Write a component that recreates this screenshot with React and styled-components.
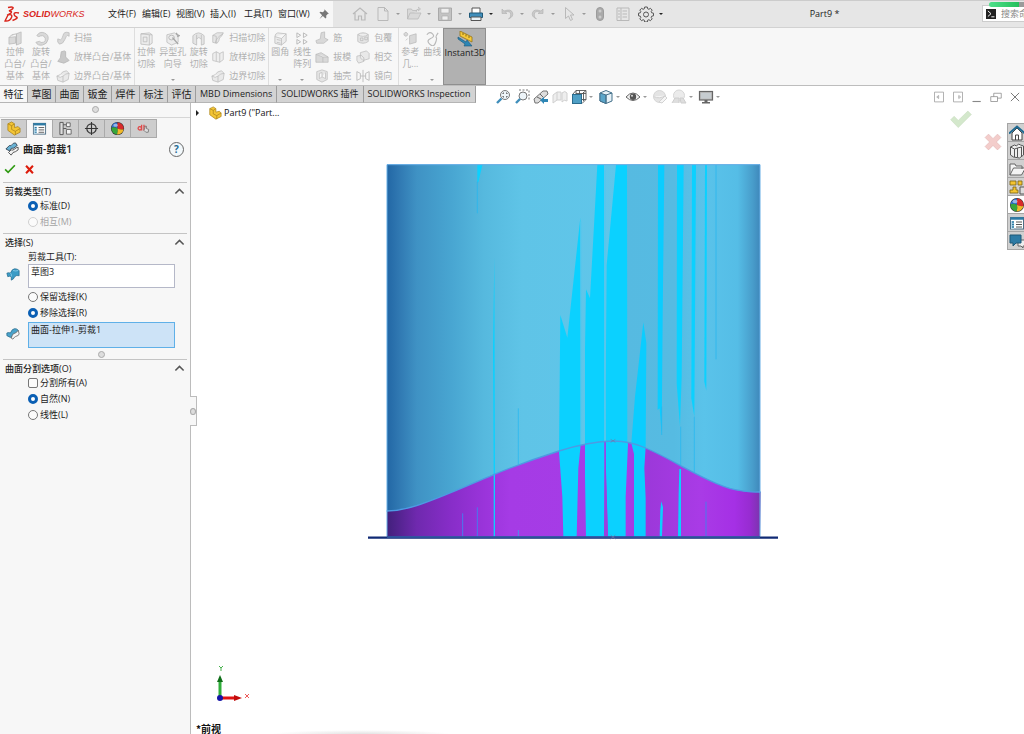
import React from 'react';
import styled, { createGlobalStyle, css } from 'styled-components';

const GlobalStyle = createGlobalStyle`
  * { box-sizing: border-box; }
  body {
    margin: 0;
    background: #fff;
    color: #222;
    font: 9px/12px "Open Sans", "Noto Sans CJK SC", sans-serif;
  }
  button {
    font: inherit;
    color: inherit;
    background: none;
    border: 0;
    padding: 0;
    margin: 0;
  }
`;

/* ---------- icons, all drawn on a 16 x 16 grid ---------- */

const g = '#b9b9b9';
const line = { fill: 'none', stroke: g, strokeWidth: 1 };
const solid = { fill: '#d9d9d9', stroke: g, strokeWidth: 0.8 };
const dark = { fill: 'none', stroke: '#555', strokeWidth: 1 };

const ball = (
  <>
    <circle cx="8" cy="8" r="7" fill="#333" />
    <path d="M8 8L8 1.500A6.500 6.500 0 0 0 1.600 7.200Q5 6 8 8z" fill="#2f6fd0" />
    <path d="M8 8L8 1.500A6.500 6.500 0 0 1 14.400 9Q11 9.500 8 8z" fill="#d92b2b" />
    <path d="M8 8Q5 6 1.600 7.200A6.500 6.500 0 0 0 7.500 14.500Q9 11 8 8z" fill="#37a63c" />
    <path d="M8 8Q9 11 7.500 14.500A6.500 6.500 0 0 0 14.400 9Q11 9.500 8 8z" fill="#f0b92a" />
    <ellipse cx="6" cy="4.500" rx="2.500" ry="1.700" fill="#fff" opacity=".5" />
  </>
);
const surface = (
  <>
    <path d="M1 7q2-1 4 0 2-5 5-5t5 2v6q-3-1-5 1-1 3-4 4V11q-2-1-4 0z" fill="#3b9cc6" stroke="#22688c" strokeWidth=".8" />
    <path d="M5 7q2 1 1 4M8 4q3 1 6 0" fill="none" stroke="#8fd0ea" strokeWidth=".9" />
  </>
);
const part = (
  <>
    <path d="M2 3l4-2 3 2v4l4-1 2 2v4l-6 3-7-5z" fill="#f3c536" stroke="#a9821a" strokeWidth=".8" />
    <path d="M2 3l4 2v4l4 2 5-3M10 11v4M6 5l3-2" fill="none" stroke="#a9821a" strokeWidth=".8" />
  </>
);
const propList = (
  <>
    <rect x="1.500" y="2.500" width="13" height="11.500" fill="#fff" stroke="#4f6f85" />
    <path d="M1.500 3.500h13" stroke="#2d7ba5" strokeWidth="2.500" />
    <path d="M2 6h3v8H2z" fill="#b9d8e8" />
    <path d="M3 7h2M3 9.500h2M3 12h2" stroke="#2d7ba5" strokeWidth="1.300" />
    <path d="M7 7h6M7 9.500h6M7 12h6" stroke="#555" />
  </>
);

const icons = {
  pin: <path d="M8.500 1.500l6 6-1.500.5-2 2 0 3-1 1L6.500 10.500 2 14.500 5.500 9.500 2 6l1-1 3.500.5 2-2z" fill="#777" />,
  home: <path d="M1 8l7-6 7 6M3 7v7h3.500v-4h3v4H13V7" {...line} strokeWidth="1.200" />,
  doc: <path d="M3 1.500h6.500l3.500 3.500v9.500H3zM9.500 1.500v3.500H13" {...line} />,
  open: <path d="M1.500 13V3h4l1 1.500h4M1.500 13L4 7h11l-3 6zM10 6q0-3 3-3M12 1l2.500 2L12 5" {...solid} />,
  save: (
    <>
      <path d="M1.500 2h13v12.500h-13z" fill="#c3c3c3" stroke="#aaa" />
      <path d="M4 2.500h8v4.500H4zM5 10h6v4H5z" fill="#eee" stroke="#aaa" strokeWidth=".6" />
    </>
  ),
  print: (
    <>
      <path d="M4 7V2h8v5" fill="#fff" stroke="#555" />
      <path d="M1.500 7h13v4.500h-13z" fill="#3f8ebb" stroke="#1f5878" />
      <path d="M3 11h10v3.500H3z" fill="#e9f2f7" stroke="#555" />
    </>
  ),
  undo: <path d="M3 3v4.500h5L6.200 6q5-1.500 5.500 2t-2.200 5q5.500-2.500 4-6.500T5 5z" fill="#c9c9c9" stroke="#b0b0b0" strokeWidth=".6" />,
  redo: <path d="M13 3v4.500H8L9.800 6Q4.800 4.500 4.300 8t2.200 5Q1 10.500 2.500 6.500T11 5z" fill="#c9c9c9" stroke="#b0b0b0" strokeWidth=".6" />,
  cursor: <path d="M4.500 1.500v11l3-2.500 2 4.500 2-1L9.500 9h3.500z" {...line} />,
  light: (
    <>
      <rect x="4.500" y="1.500" width="7" height="13" rx="3.500" fill="#aaa" stroke="#9c9c9c" />
      <circle cx="8" cy="5" r="1.500" fill="#ccc" />
      <circle cx="8" cy="11" r="1.500" fill="#ccc" />
    </>
  ),
  options: <path d="M2 2h12v12.500H2zM6 2v12.500M3 5h2M3 8h2M3 11h2M7.500 5H12M7.500 8H12M7.500 11H12" {...line} />,
  gear: (
    <path
      d="M6.700 1h2.600l.4 1.800 1.200.5 1.500-1 1.800 1.800-1 1.500.5 1.200 1.800.4v2.600l-1.800.4-.5 1.200 1 1.500-1.800 1.800-1.500-1-1.200.5-.4 1.800H6.700l-.4-1.800-1.200-.5-1.500 1-1.800-1.800 1-1.500-.5-1.200-1.800-.4V7.200l1.800-.4.5-1.200-1-1.500 1.800-1.800 1.500 1 1.200-.5zM8 6a2.500 2.500 0 1 0 0 5 2.500 2.500 0 0 0 0-5z"
      {...dark}
    />
  ),

  extrude: <path d="M1 7l7-1v7l-7 1zM9 3l5-2v12l-5 2zM9 3v12M1 7l3-3 5-1" {...solid} />,
  revolve: <path d="M3 5Q6 0 11 2t4 7-6 6-7-3l4-1q1 2 4 1t2-4-3-3-4 1z" {...solid} />,
  sweep: <path d="M15 2q-6-2-7 3t-3 5l-3-1q-1 4 2 6 4 0 6-5t3-5l2 1z" {...solid} />,
  loft: <path d="M6 2l4-1 1 1v6l4 4-6 3-7-2 3-4z" fill="#c9c9c9" stroke={g} />,
  boundary: <path d="M1 8q4-1 5-3t6-3l3 3-1 7-6 3-6-2zM1 8q4 3 7 0t7-3M8 8v7" {...solid} fill="#e9e9e9" />,
  extrudeCut: <path d="M2 3l9-1 3 2v9l-3 2-9-1zM2 3l9 1 3 0M11 4v11M4.500 6.500h4v5h-4z" {...solid} fill="#ececec" />,
  hole: (
    <>
      <path d="M2 4l8-2 4 3v7l-7 3-5-3z" {...solid} fill="#ececec" />
      <ellipse cx="7" cy="7" rx="3" ry="2.500" {...line} />
      <path d="M8 7l6 7M12 2l1 2 2 1-2 1" stroke="#a8a8a8" strokeWidth="1.500" fill="none" />
    </>
  ),
  revolveCut: <path d="M2 5q6-6 12 0v9l-3 1V9Q8 5 6 9v6l-4-2zM6 9V4M11 9V4" {...solid} fill="#e5e5e5" />,
  sweepCut: <path d="M2 5l5-3h7l-2 4q-3 1-3 5l-2 3-5-1zM5 14q0-6 9-11M2 5l4 1v8" {...solid} fill="#e5e5e5" />,
  loftCut: <path d="M2 4l4-2v11l-4-1zM6 2l4 2v10l-4-1M10 4l4-2v9l-4 3" {...solid} fill="#eee" />,
  fillet: <path d="M2 6q0-3 3-4l9 1v8l-5 4-7-2zM2 6l7 2 5-5M9 8v7M4 9l4 1M4 12l4 1" {...solid} fill="#ececec" />,
  pattern: <path d="M2 2l4 2.500L2 7zM9 2l4 2.500L9 7zM2 9l4 2.500L2 14zM9 9l4 2.500L9 14z" {...line} />,
  rib: <path d="M7 2l4-1v7l4 2-5 4H2L1 11l5-2z" {...solid} />,
  draft: <path d="M1 5l6-2 8 5v6H1zM1 5l8 3 6 0M9 8v6" {...solid} />,
  shell: <path d="M2 3l6-2 6 2v9l-6 3-6-3zM5 5v6l3-2V4zM8 9l4 2V4" {...solid} fill="#e5e5e5" />,
  wrap: <path d="M2 4q6-4 12 0v8q-6 4-12 0zM2 4q6 4 12 0M5 8h3v3H5zM10 7h3v3h-3z" {...solid} fill="#e5e5e5" />,
  intersect: <path d="M5 3l7-2 3 3v6l-7 2-3-3zM1 7l5-1 3 3v4l-6 2-2-3z" {...solid} fill="#e9e9e9" />,
  mirror: <path d="M1 3l4 2v6l-4 2zM15 3l-4 2v6l4 2zM8 1v14M5 8h6" {...line} />,
  refGeom: <path d="M7 5l7-2v9l-7 2zM3 1.500a2 2 0 1 0 .1 0zM5 8l-2 2" {...solid} />,
  curves: <path d="M2 4Q5 0 8 3T6 8 5 14 11 13 12 7 14 2" {...line} strokeWidth="1.300" />,
  instant3d: (
    <>
      <path d="M3 0l12 6v5L3 5z" fill="#f6c93a" stroke="#957315" strokeWidth=".8" />
      <path d="M6 2v2M9 3.500v2M12 5v2" stroke="#6d5310" strokeWidth=".8" />
      <path d="M1 6l8 5 1-2 5 6-8 0 1-2-7-5z" fill="#2d86b5" stroke="#1b5676" strokeWidth=".6" />
    </>
  ),

  zoomFit: (
    <>
      <circle cx="10" cy="6" r="4.500" fill="#eef5f9" stroke="#777" />
      <path d="M8 5V4h1M11 4h1v1M12 7v1h-1M9 8H8V7" stroke="#444" fill="none" strokeWidth=".9" />
      <path d="M6.500 9.500L2 14" stroke="#3f8ebb" strokeWidth="2.400" />
    </>
  ),
  zoomArea: (
    <>
      <path d="M5 1h10v11" stroke="#777" fill="none" strokeDasharray="2 1.500" />
      <circle cx="9" cy="7" r="4" fill="#eef5f9" stroke="#777" />
      <path d="M6 10l-4 4" stroke="#3f8ebb" strokeWidth="2.400" />
    </>
  ),
  prevView: (
    <>
      <path d="M1 10l9-8 4 0 1 3-10 9H2z" fill="#ddd" stroke="#666" strokeWidth=".9" />
      <path d="M4 8l4 2M7 5l3 3" stroke="#666" fill="none" />
      <path d="M7 11l4-3v2h4v3h-4v2z" fill="#2d86b5" />
    </>
  ),
  section: <path d="M1 6l4-3v8l-4 3zM5 3h4v8H5M10 4q3-3 5 0v8q-3-2-5 1z" fill="#eee" stroke="#d0d0d0" />,
  orient: (
    <>
      <path d="M5 1.500h10v9h-10zM1.500 5.500L5 1.500M11 5l4-3.500M11 14.500l4-4M8.500 1.500v4M5 4.500h10M12.500 3v9" fill="none" stroke="#555" strokeWidth=".9" />
      <rect x="1.500" y="5.500" width="9" height="9" fill="#4f9fc5" stroke="#2b6c8e" />
    </>
  ),
  display: (
    <>
      <path d="M2 4l6-2.500 6 2.500v8L8 14.500 2 12z" fill="#e6f1f7" stroke="#44708a" />
      <path d="M2 4l6 2v8.500L2 12z" fill="#5aa5c9" stroke="#44708a" />
      <path d="M8 6l6-2M8 6v8" fill="none" stroke="#44708a" />
    </>
  ),
  eye: (
    <>
      <path d="M1 8q7-8 14 0-7 7-14 0z" fill="#f3f3f3" stroke="#666" />
      <circle cx="8" cy="7.700" r="3.200" fill="#555" />
      <circle cx="7" cy="6.700" r="1" fill="#ddd" />
    </>
  ),
  ballEdit: (
    <>
      <circle cx="7.500" cy="7.500" r="6" fill="#e4e4e4" stroke="#d6d6d6" />
      <path d="M1.500 7.500q6 3 12-1M7 13l6-6 2 2-5 5z" fill="#f5f5f5" stroke="#d2d2d2" />
    </>
  ),
  scene: (
    <>
      <circle cx="8" cy="6.500" r="5.500" fill="#ebebeb" stroke="#d6d6d6" />
      <path d="M1 14l3-5h4v5M10 14l-1-5 3 0 3 5z" fill="#dedede" stroke="#cecece" />
    </>
  ),
  monitor: (
    <>
      <rect x="1.500" y="2.500" width="13" height="8.500" fill="#bdbdbd" stroke="#666" strokeWidth="1.200" />
      <path d="M3 4h10v5.500H3z" fill="#c6ccd0" />
      <path d="M6.500 11h3v2H12v1.500H4V13h2.500z" fill="#666" />
    </>
  ),

  part,
  propList,
  ball,
  config: (
    <>
      <path d="M2 1.500h3.500v13H2zM5.500 8H9M5.500 4H9" {...dark} fill="#ddd" />
      <path d="M9 2h4v4H9zM9 9h5v5H9z" fill="#f4f4f4" stroke="#666" />
    </>
  ),
  target: (
    <>
      <circle cx="8" cy="8" r="5" fill="none" stroke="#333" strokeWidth="1.200" />
      <path d="M8 1v14M1 8h14" stroke="#333" strokeWidth="1.200" />
    </>
  ),
  dims: (
    <>
      <path d="M4 6a1.800 1.800 0 1 0 .1 0zM6 4v6M8.500 4v6M8.500 6h2v3h-2" fill="none" stroke="#e04a4a" strokeWidth="1.400" />
      <path d="M9.500 7V5.500h1.500V8l2.500 1-.5 3h-2.500L8.500 10z" fill="#ddd" stroke="#777" strokeWidth=".9" />
    </>
  ),
  trim: (
    <>
      <path d="M1 8l4-4q2 1 3-1t4-2l2 3-4 3q-3-1-5 3z" fill="#69b2d4" stroke="#234" strokeWidth=".9" />
      <path d="M4 12l3-3q2 1 4-1t4-2l0 3-3 2q-3 0-5 4z" fill="#f2f2f2" stroke="#333" strokeWidth=".9" />
    </>
  ),
  surface,
  surfacePiece: (
    <>
      <path d="M1 8q2-1 4 0 2-5 5-5t4 2l-3 4q-3 0-4 3l-2 1-4-2z" fill="#4aa3cb" stroke="#2a6d8e" strokeWidth=".9" />
      <path d="M6 14l1-3q1-3 4-3l3-3 1 4q0 2-4 3-1 0-3 3z" fill="#f5f5f5" stroke="#666" strokeWidth=".9" />
    </>
  ),
  ok: <path d="M1.500 8.500l4 4L14.500 3" fill="none" stroke="#2f9a12" strokeWidth="2.200" />,
  cancel: <path d="M3 2.500l10 11M13 2.500L3 13.500" fill="none" stroke="#dd1c0c" strokeWidth="3" />,
  up: <path d="M2 11l6-6 6 6" fill="none" stroke="#555" strokeWidth="2.200" />,

  paneLeft: <path d="M2 1.500h12v13H2zM7.500 6L5 8l2.500 2z" fill="none" stroke="#999" />,
  paneRight: <path d="M2 1.500h12v13H2zM9 6l2.500 2L9 10z" fill="none" stroke="#999" />,
  minimize: <path d="M2 14h11" stroke="#888" strokeWidth="1.500" />,
  restore: <path d="M1 7.500h9v6.500H1zM5 7.500V3h10v6.500h-5" fill="none" stroke="#888" />,
  close: <path d="M2.500 2.500l11 11M13.500 2.500L2.500 13.500" fill="none" stroke="#777" strokeWidth="1.300" />,

  bigCheck: <path d="M0.500 7.800L3 5.300 6 8.300 13 1.500l2.500 2.500L6 13.500z" fill="#d4e8cc" stroke="#c6dbbd" strokeWidth=".4" />,
  bigCross: <path d="M1 4l3-3 4 4 4-4 3 3-4 4 4 4-3 3-4-4-4 4-3-3 4-4z" fill="#f3cdcb" stroke="#e2b8b6" strokeWidth=".6" />,

  houseBlue: (
    <>
      <path d="M3 8v7h10V8L8 3z" fill="#fff" stroke="#444" />
      <path d="M0 8.500l8-7 8 7" fill="none" stroke="#1f6a92" strokeWidth="2" />
      <path d="M6.500 15v-5h3v5" fill="none" stroke="#444" />
    </>
  ),
  library: <path d="M1.500 4l4-2 2 1 2-2 2 1 3 1v9l-4 3-6-1-3-2zM1.500 4l4 2v8M5.500 6l3-1v9M8.500 5l4-1v9" fill="#eee" stroke="#555" />,
  folder: <path d="M1 14V3h5l1 2h6v3M1 14L4.500 7h12l-4 7z" fill="#f4f4f4" stroke="#666" />,
  palette: (
    <>
      <path d="M1 2h6v4H1zM9 2h4v4H9zM4 8h3v3h2v3H1v-3h3z" fill="#f4c430" stroke="#7a6214" strokeWidth=".8" />
      <path d="M11 8h5v7h-5z" fill="#ddd" stroke="#555" />
    </>
  ),
  forum: (
    <>
      <path d="M9 7h7v6h-2v2l-2-2H9z" fill="#eee" stroke="#666" />
      <path d="M1 2h11v8H7l-3 3v-3H1z" fill="#2d7ba5" stroke="#1e5877" />
    </>
  ),
  terminal: (
    <>
      <rect x="0" y="0" width="16" height="16" fill="#222" />
      <path d="M3 3l5 4.500L3 12M8.500 12.500h5" fill="none" stroke="#fff" strokeWidth="1.500" />
    </>
  ),
};

function Icon({ name, size = 16 }) {
  return (
    <svg width={size} height={size} viewBox="0 0 16 16" aria-hidden="true">
      {icons[name]}
    </svg>
  );
}

/* ---------- shell ---------- */

const Page = styled.div`
  display: flex;
  flex-direction: column;
  height: 100vh;
  overflow: hidden;
  & svg { display: block; flex: none; }
`;

const Caret = styled.i`
  border: 2px solid transparent;
  border-top-color: ${(p) => p.$color || '#999'};
  border-bottom: 0;
`;

const TitleBar = styled.header`
  display: flex;
  flex: none;
  height: 28px;
  background: #e6e6e6;
  border-top: 1px solid #ccc;
  border-bottom: 1px solid #d2d2d2;
`;

const BrandArea = styled.div`
  display: flex;
  align-items: center;
  flex: none;
  width: 333px;
  padding-left: 4px;
  background: #f7f7f7;
`;

const Brand = styled.div`
  display: flex;
  align-items: center;
  gap: 3px;
  width: 104px;
  color: #d9261c;
  font: italic 9px/12px "Liberation Sans", sans-serif;
`;

const MenuNav = styled.nav`
  display: flex;
  flex: none;
  width: 210px;
  white-space: nowrap;
  & > button {
    width: 34px;
    text-align: left;
  }
`;

const QuickBar = styled.div`
  display: flex;
  align-items: center;
  flex: none;
  padding-left: 19px;
`;

const QuickButton = styled.button`
  display: flex;
  align-items: center;
  width: ${(p) => (p.$split ? 31 : 23)}px;
  & > i { margin-left: 5px; }
`;

const DocTitle = styled.div`
  flex: 1;
  align-self: center;
  padding-right: 2px;
  text-align: center;
`;

const SearchWrap = styled.div`
  position: relative;
`;

const SearchBox = styled.label`
  display: flex;
  align-items: center;
  gap: 5px;
  width: 42px;
  height: 17px;
  margin-top: 4px;
  padding-left: 3px;
  overflow: hidden;
  background: #fff;
  border: 1px solid #ccc;
  border-right: 0;
  & input {
    flex: none;
    width: 80px;
    padding: 0;
    border: 0;
    outline: 0;
    font: inherit;
  }
  & input::placeholder { color: #888; opacity: 1; }
`;

const Progress = styled.div`
  position: absolute;
  top: 1px;
  right: 0;
  width: 35px;
  height: 5px;
  border-radius: 3px 0 0 3px;
  background: linear-gradient(90deg, #4fe08a, #24c05c 85%, #9a9a9a 85%);
`;

/* ---------- ribbon ---------- */

const Ribbon = styled.section`
  display: flex;
  flex: none;
  height: 58px;
  background: #f7f7f7;
  border-bottom: 1px solid #bdbdbd;
  color: #b0b0b0;
`;

const Group = styled.div`
  display: flex;
  flex: none;
  padding: 0 ${(p) => p.$end || 0}px 0 ${(p) => p.$start || 0}px;
  border-right: ${(p) => (p.$last ? 0 : 1)}px solid #dedede;
`;

const BigButton = styled.button`
  display: flex;
  flex-direction: column;
  align-items: center;
  width: ${(p) => p.$w}px;
  padding: 3px 0 4px;
  text-align: center;
  white-space: pre;
  & > i { margin-top: auto; }
  ${(p) =>
    p.$on &&
    css`
      color: #1c1c1c;
      background: #b1b1b1;
      border: 1px solid #8f8f8f;
      padding-top: 2px;
    `}
`;

const SmallColumn = styled.div`
  display: flex;
  flex-direction: column;
  padding: 0 3px 0 2px;
`;

const SmallButton = styled.button`
  display: flex;
  align-items: center;
  gap: 4px;
  height: 19px;
  white-space: nowrap;
`;

/* ---------- tabs and heads-up toolbar ---------- */

const TabRow = styled.div`
  display: flex;
  align-items: flex-start;
  flex: none;
  height: 16px;
  position: relative;
  z-index: 2;
`;

const Tabs = styled.nav`
  display: flex;
  flex: none;
`;

const Tab = styled.button`
  height: 17px;
  min-width: 28px;
  padding: 0 ${(p) => (p.$wide ? 4 : 3)}px;
  border-right: 1px solid #9d9d9d;
  border-bottom: 1px solid #b5b5b5;
  background: ${(p) => (p.$active ? '#f7f7f7' : '#d3d3d3')};
  font-size: ${(p) => (p.$wide ? 9 : 10)}px;
  line-height: 16px;
  white-space: nowrap;
`;

const HeadsUp = styled.div`
  display: flex;
  align-items: center;
  gap: 3px;
  height: 22px;
  margin-left: 19px;
`;

const HudButton = styled.button`
  display: flex;
  align-items: center;
  & > i { margin: 0 2px; }
`;

const WindowButtons = styled.div`
  display: flex;
  align-items: center;
  gap: 7px;
  height: 22px;
  margin-left: auto;
  padding-right: 3px;
`;

/* ---------- property panel ---------- */

const Main = styled.main`
  display: flex;
  flex: 1;
  min-height: 0;
`;

const Panel = styled.aside`
  flex: none;
  position: relative;
  z-index: 1;
  width: 191px;
  background: #f7f7f7;
  border-right: 1px solid #bcbcbc;
`;

const Grip = styled.div`
  display: flex;
  align-items: center;
  justify-content: center;
  height: ${(p) => p.$h}px;
  padding-left: ${(p) => p.$shift || 0}px;
  &::before {
    content: "";
    width: 5px;
    height: 5px;
    border: 1px solid #aaa;
    border-radius: 50%;
    background: #ddd;
  }
`;

const SideHandle = styled(Grip)`
  position: absolute;
  left: 190px;
  top: 294px;
  width: 7px;
  background: #f7f7f7;
  border: 1px solid #bcbcbc;
  border-left: 0;
`;

const PanelTabs = styled.div`
  display: flex;
  height: 21px;
  padding: 1px 0 0 1px;
  border-top: 1px solid #d6d6d6;
`;

const PanelTab = styled.button`
  display: flex;
  align-items: center;
  justify-content: center;
  width: 26px;
  height: 19px;
  border: 1px solid #aaa;
  border-left-width: 0;
  background: ${(p) => (p.$active ? '#f7f7f7' : '#cdcdcd')};
  border-bottom-color: ${(p) => (p.$active ? '#f7f7f7' : '#aaa')};
`;

const PanelTitle = styled.div`
  display: flex;
  align-items: center;
  gap: 4px;
  height: 22px;
  padding: 0 6px 0 5px;
  font-size: 10px;
  font-weight: 600;
`;

const Help = styled.button`
  width: 15px;
  height: 15px;
  margin-left: auto;
  border: 1px solid #666;
  border-radius: 50%;
  background: #f2f8fb;
  color: #1f6a92;
  font-size: 10px;
  font-weight: 700;
  line-height: 12px;
`;

const Confirm = styled.div`
  display: flex;
  align-items: center;
  gap: 8px;
  height: 22px;
  padding: 0 0 4px 4px;
`;

const Section = styled.section`
  margin: 0 3px;
  border-top: 1px solid #c4c4c4;
  padding-bottom: ${(p) => p.$bottom || 0}px;
`;

const SectionHead = styled.button`
  display: flex;
  align-items: center;
  justify-content: space-between;
  width: 100%;
  height: 15px;
  padding: 2px 2px 0 2px;
  font-weight: 500;
`;

const Caption = styled.label`
  display: block;
  height: 15px;
  padding-left: 25px;
  line-height: 15px;
`;

const Choice = styled.label`
  display: flex;
  align-items: center;
  gap: 2px;
  height: 16px;
  padding-left: 25px;
  color: ${(p) => (p.$off ? '#a5a5a5' : '#222')};
  & input {
    appearance: none;
    flex: none;
    width: 10px;
    height: 10px;
    margin: 0;
    border: 1px solid ${(p) => (p.$off ? '#d0d0d0' : '#777')};
    border-radius: 50%;
    background: #fbfbfb;
  }
  & input[type="checkbox"] { border-radius: 2px; }
  & input[type="radio"]:checked { border: 3px solid #0a5fb4; background: #fff; }
`;

const PickRow = styled.div`
  display: flex;
  align-items: center;
  padding-left: 3px;
  margin: ${(p) => (p.$low ? 1 : 0)}px 0 1px;
  & > svg { margin: 0 8px 4px 0; }
`;

const PickList = styled.textarea`
  display: block;
  flex: none;
  width: 147px;
  height: ${(p) => (p.$active ? 26 : 24)}px;
  padding: 1px 2px;
  border: 1px solid ${(p) => (p.$active ? '#5fb0e8' : '#b5b8c8')};
  border-radius: 0;
  outline: 0;
  resize: none;
  overflow: hidden;
  background: ${(p) => (p.$active ? '#cde3f7' : '#fff')};
  color: #222;
  font: inherit;
`;

/* ---------- graphics area ---------- */

const Canvas = styled.section`
  flex: 1;
  position: relative;
  overflow: hidden;
  background: #fff;
`;

const Tree = styled.button`
  display: flex;
  align-items: center;
  gap: 2px;
  padding: 4px 0 0 5px;
  color: #111;
  font-weight: 500;
  & > i {
    margin-right: 7px;
    border: 3px solid transparent;
    border-left: 3px solid #222;
    border-right: 0;
  }
`;

const OnCanvas = styled.div`
  position: absolute;
  left: ${(p) => p.$x}px;
  top: ${(p) => p.$y}px;
`;

const Corner = styled.div`
  position: absolute;
  top: 7px;
  right: 22px;
  display: flex;
  gap: 12px;
  align-items: flex-start;
  & > button:last-child { margin-top: 24px; }
`;

const TaskPane = styled.nav`
  position: absolute;
  top: 21px;
  right: 0;
  width: 17px;
  overflow: hidden;
  border: 1px solid #a5a5a5;
  border-right: 0;
`;

const TaskButton = styled.button`
  display: flex;
  align-items: center;
  height: 18px;
  width: 18px;
  padding-left: 1px;
  border-bottom: 1px solid #a5a5a5;
  background: ${(p) => (p.$active ? '#fff' : '#d0d0d0')};
  &:last-child {
    height: 17px;
    border-bottom: 0;
  }
`;

const Triad = styled.div`
  position: absolute;
  left: 21px;
  bottom: 30px;
`;

const ViewName = styled.div`
  position: absolute;
  left: 5px;
  bottom: 0;
  padding-top: 2px;
  color: #111;
  font: 600 10px/10px "Noto Sans CJK SC", sans-serif;
`;

const DockShadow = styled.div`
  position: absolute;
  left: 80px;
  bottom: 0;
  width: 180px;
  height: 4px;
  background: radial-gradient(ellipse at bottom, #e2e2e2, #fff 70%);
`;

function Logo() {
  return (
    <svg width="16" height="17" viewBox="0 0 32 34" fill="none" stroke="#d9261c" strokeWidth="2.800" aria-hidden="true">
      <path d="M8 3q8-2 10 0t-8 7q8 0 3 5l-4 2" />
      <path d="M8 18l-6 12q10 1 13-7t-9-5" />
      <path d="M30 14q-10-2-10 2t5 6-8 7" />
    </svg>
  );
}

const waveLine =
  'M20 1083Q65 1082 110 1067C190 1040 270 1003 343 973S480 921 537 903S650 874 700 873C740 873 765 880 797 894S860 924 900 946C960 978 1020 1010 1065 1019S1115 1026 1142 1026';

function TrimmedCylinder() {
  return (
    <svg width="412" height="396" viewBox="-36 0 1236 1188" role="img" aria-label="Part9">
      <defs>
        <linearGradient id="wall">
          <stop offset="0" stopColor="#2267a5" />
          <stop offset=".03" stopColor="#2f77b1" />
          <stop offset=".08" stopColor="#3f92c4" />
          <stop offset=".17" stopColor="#48a5d1" />
          <stop offset=".26" stopColor="#56b9de" />
          <stop offset=".36" stopColor="#5fc4e7" />
          <stop offset=".64" stopColor="#60c6ea" />
          <stop offset=".645" stopColor="#56bae1" />
          <stop offset=".77" stopColor="#56bbe2" />
          <stop offset=".85" stopColor="#5ac3ea" />
          <stop offset=".94" stopColor="#55bde6" />
          <stop offset=".98" stopColor="#489dcb" />
          <stop offset="1" stopColor="#3f88bb" />
        </linearGradient>
        <linearGradient id="base">
          <stop offset="0" stopColor="#41207b" />
          <stop offset=".08" stopColor="#6f29ae" />
          <stop offset=".17" stopColor="#872dc8" />
          <stop offset=".26" stopColor="#9a34da" />
          <stop offset=".33" stopColor="#a53be5" />
          <stop offset=".64" stopColor="#a63de7" />
          <stop offset=".7" stopColor="#9c38da" />
          <stop offset=".84" stopColor="#a93be6" />
          <stop offset=".93" stopColor="#a530e5" />
          <stop offset=".97" stopColor="#982cd2" />
          <stop offset="1" stopColor="#7a35ad" />
        </linearGradient>
      </defs>
      <rect x="21" y="43" width="1119" height="1118" fill="url(#wall)" />
      <path d={`${waveLine}L1140 1161H21V1083z`} fill="url(#base)" />
      <g fill="#0bd1ff">
        <path d="M292 45h15l-12 52h-3z" />
        <path d="M541 495L562 563 601 203 602 885 595 955 590 1160H550L547 1040 537 905z" />
        <path d="M618 418L630 445 652 45H672L673 1160H618L615 980V600z" />
        <path d="M708 45H741L742 875 744 882 737 1040V1160H684L678 960 677 720 680 345z" />
        <path d="M790 517L799 580 797 890 793 955 797 1045V1160H762V912L754 880 765 740z" fill="#0acdff" />
        <path d="M834 45H853L848 500 845 855 839 775 833 780z" fill="#0acdff" />
        <path d="M891 45H911L905 680 900 830 890 700z" />
        <path d="M936 45H948L943 800 934 745z" />
        <path d="M975 45H981L979 722 973 695z" />
        <path d="M339 600L343 322 345 975V1160H341V980z" />
        <path d="M894 1160L896 1030 898 957H903V1160z" />
        <path d="M839 1160L841 1080 844 1054 849 1072 846 1160z" />
      </g>
      <g stroke="#20b7f2" strokeWidth="2" fill="none">
        <path d="M292 95v95M415 775v169M415 1140v20M902 830v115M943 800v168M1008 45v583M845 770v85" />
        <path d="M248 1090v70M292 1072v88M978 1055v105" stroke="#4b78ee" strokeWidth="3" />
      </g>
      <path d="M676 875v50l8 235h-12z" fill="#9a3fdf" />
      <path d="M675 60v815M603 215v670" stroke="#55c6ee" strokeWidth="3" />
      <path d={waveLine} fill="none" stroke="#4d9be3" strokeWidth="4" />
      <path d="M21 1160V44H1140V1160" fill="none" stroke="#66aee6" strokeWidth="3" />
      <path d="M-36 1163H1194" stroke="#102a75" strokeWidth="7" />
      <path d="M21 1161H1140" stroke="#345ea8" strokeWidth="5" />
      <path d="M692 1155l14 12M706 1155l-14 12M692 868l14 9M706 868l-14 9" stroke="#6d7aa8" strokeWidth="2" />
    </svg>
  );
}

function AxisTriad() {
  return (
    <svg width="40" height="40" viewBox="0 0 40 40" aria-label="XY">
      <path d="M8 32V16" stroke="#2fae3a" strokeWidth="3" />
      <path d="M8 11l3 7H5z" fill="#0f6e18" />
      <path d="M8 34h16" stroke="#e01313" strokeWidth="3" />
      <path d="M30 34l-8-3v6z" fill="#c20c0c" />
      <circle cx="8" cy="34" r="3" fill="#1414a8" />
      <path d="M7 2l2 2 2-2M9 4v3" fill="none" stroke="#46b04c" />
      <path d="M33 30l4 4M37 30l-4 4" stroke="#ee5a5a" />
    </svg>
  );
}

/* ---------- content ---------- */

const menus = ['文件(F)', '编辑(E)', '视图(V)', '插入(I)', '工具(T)', '窗口(W)'];

const quick = [
  ['home', '主页'],
  ['doc', '新建', true],
  ['open', '打开', true],
  ['save', '保存', true],
  ['print', '打印', true, '#222'],
  ['undo', '撤销', true],
  ['redo', '重做', true],
  ['cursor', '选择', true],
  ['light', '重建模型'],
  ['options', '文件属性'],
  ['gear', '选项', true, '#222'],
];

const hud = [
  ['zoomFit', '整屏显示'],
  ['zoomArea', '局部放大'],
  ['prevView', '上一视图'],
  ['section', '剖面视图'],
  ['orient', '视图定向', true],
  ['display', '显示样式', true],
  ['eye', '隐藏/显示', true],
  ['ballEdit', '编辑外观'],
  ['scene', '应用布景', true],
  ['monitor', '视图设定', true],
];

function Big({ icon, text, w, caret }) {
  return (
    <BigButton $w={w}>
      <Icon name={icon} size={15} />
      {text}
      {caret && <Caret />}
    </BigButton>
  );
}

function Smalls({ items }) {
  return (
    <SmallColumn>
      {items.map(([icon, text]) => (
        <SmallButton key={text}>
          <Icon name={icon} size={14} />
          {text}
        </SmallButton>
      ))}
    </SmallColumn>
  );
}

function Head({ children }) {
  return (
    <SectionHead>
      {children}
      <Icon name="up" size={11} />
    </SectionHead>
  );
}

export default function App() {
  return (
    <Page>
      <GlobalStyle />
      <TitleBar>
        <BrandArea>
          <Brand>
            <Logo />
            <span><b>SOLID</b>WORKS</span>
          </Brand>
          <MenuNav>
            {menus.map((m) => <button key={m}>{m}</button>)}
          </MenuNav>
          <Icon name="pin" size={12} />
        </BrandArea>
        <QuickBar>
          {quick.map(([icon, label, split, color]) => (
            <QuickButton key={icon} aria-label={label} $split={split}>
              <Icon name={icon} />
              {split && <Caret $color={color} />}
            </QuickButton>
          ))}
        </QuickBar>
        <DocTitle>Part9 *</DocTitle>
        <SearchWrap>
          <SearchBox>
            <Icon name="terminal" size={10} />
            <input type="search" placeholder="搜索命令" aria-label="搜索命令" />
          </SearchBox>
          <Progress />
        </SearchWrap>
      </TitleBar>

      <Ribbon>
        <Group $start={2}>
          <Big icon="extrude" w={26} text={'拉伸\n凸台/\n基体'} />
          <Big icon="revolve" w={26} text={'旋转\n凸台/\n基体'} />
          <Smalls items={[['sweep', '扫描'], ['loft', '放样凸台/基体'], ['boundary', '边界凸台/基体']]} />
        </Group>
        <Group>
          <Big icon="extrudeCut" w={22} text={'拉伸\n切除'} />
          <Big icon="hole" w={31} text={'异型孔\n向导'} caret />
          <Big icon="revolveCut" w={21} text={'旋转\n切除'} />
          <Smalls items={[['sweepCut', '扫描切除'], ['loftCut', '放样切除'], ['boundary', '边界切除']]} />
        </Group>
        <Group $end={3}>
          <Big icon="fillet" w={22} text="圆角" caret />
          <Big icon="pattern" w={22} text={'线性\n阵列'} caret />
          <Smalls items={[['rib', '筋'], ['draft', '拔模'], ['shell', '抽壳']]} />
          <Smalls items={[['wrap', '包覆'], ['intersect', '相交'], ['mirror', '镜向']]} />
        </Group>
        <Group $last>
          <Big icon="refGeom" w={22} text={'参考\n几...'} caret />
          <Big icon="curves" w={22} text="曲线" caret />
        </Group>
        <BigButton $w={43} $on>
          <Icon name="instant3d" />
          Instant3D
        </BigButton>
      </Ribbon>

      <TabRow>
        <Tabs>
          <Tab $active>特征</Tab>
          {['草图', '曲面', '钣金', '焊件', '标注', '评估'].map((t) => <Tab key={t}>{t}</Tab>)}
          {['MBD Dimensions', 'SOLIDWORKS 插件', 'SOLIDWORKS Inspection'].map((t) => <Tab key={t} $wide>{t}</Tab>)}
        </Tabs>
        <HeadsUp>
          {hud.map(([icon, label, split]) => (
            <HudButton key={icon} aria-label={label}>
              <Icon name={icon} />
              {split && <Caret />}
            </HudButton>
          ))}
        </HeadsUp>
        <WindowButtons>
          {['paneLeft', 'paneRight', 'minimize', 'restore', 'close'].map((n) => (
            <button key={n} aria-label={n}><Icon name={n} size={12} /></button>
          ))}
        </WindowButtons>
      </TabRow>

      <Main>
        <Panel>
          <Grip $h={15} />
          <PanelTabs>
            {['part', 'propList', 'config', 'target', 'ball', 'dims'].map((n) => (
              <PanelTab key={n} $active={n === 'propList'} aria-label={n}><Icon name={n} size={15} /></PanelTab>
            ))}
          </PanelTabs>
          <PanelTitle>
            <Icon name="trim" size={14} />
            曲面-剪裁1
            <Help>?</Help>
          </PanelTitle>
          <Confirm>
            <button aria-label="确定"><Icon name="ok" size={12} /></button>
            <button aria-label="取消"><Icon name="cancel" size={11} /></button>
          </Confirm>

          <Section $bottom={3}>
            <Head>剪裁类型(T)</Head>
            <Choice><input type="radio" name="kind" defaultChecked />标准(D)</Choice>
            <Choice $off><input type="radio" name="kind" disabled />相互(M)</Choice>
          </Section>

          <Section>
            <Head>选择(S)</Head>
            <Caption htmlFor="tool">剪裁工具(T):</Caption>
            <PickRow>
              <Icon name="surface" size={14} />
              <PickList id="tool" readOnly defaultValue="草图3" />
            </PickRow>
            <Choice><input type="radio" name="keep" />保留选择(K)</Choice>
            <Choice><input type="radio" name="keep" defaultChecked />移除选择(R)</Choice>
            <PickRow $low>
              <Icon name="surfacePiece" size={14} />
              <PickList $active readOnly aria-label="移除选择" defaultValue="曲面-拉伸1-剪裁1" />
            </PickRow>
            <Grip $h={10} $shift={12} />
          </Section>

          <Section>
            <Head>曲面分割选项(O)</Head>
            <Choice><input type="checkbox" />分割所有(A)</Choice>
            <Choice><input type="radio" name="split" defaultChecked />自然(N)</Choice>
            <Choice><input type="radio" name="split" />线性(L)</Choice>
          </Section>
          <SideHandle $h={30} />
        </Panel>

        <Canvas>
          <Tree>
            <i />
            <Icon name="part" size={14} />
            Part9 ("Part...
          </Tree>
          <OnCanvas $x={177} $y={48}><TrimmedCylinder /></OnCanvas>
          <Corner>
            <button aria-label="确定"><Icon name="bigCheck" size={22} /></button>
            <button aria-label="取消"><Icon name="bigCross" size={18} /></button>
          </Corner>
          <TaskPane>
            {['houseBlue', 'library', 'folder', 'palette', 'ball', 'propList', 'forum'].map((n) => (
              <TaskButton key={n} $active={n === 'ball'} aria-label={n}><Icon name={n} /></TaskButton>
            ))}
          </TaskPane>
          <Triad><AxisTriad /></Triad>
          <DockShadow />
          <ViewName>*前视</ViewName>
        </Canvas>
      </Main>
    </Page>
  );
}
